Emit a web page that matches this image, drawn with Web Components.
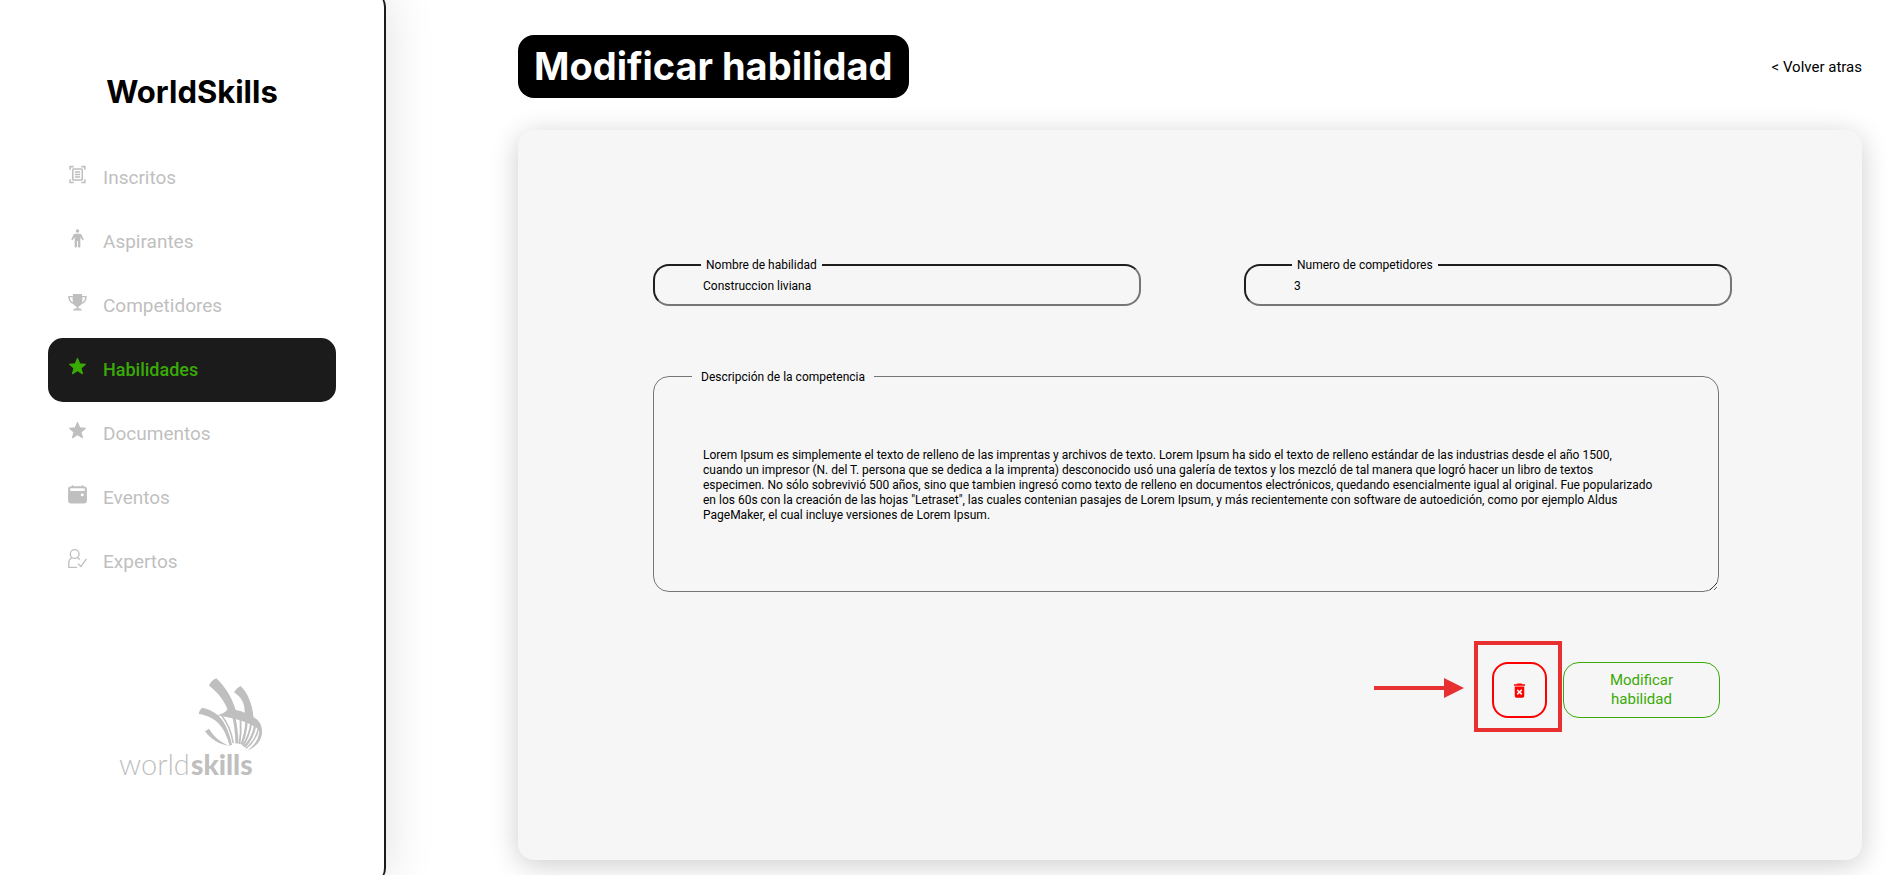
<!DOCTYPE html>
<html lang="es">
<head>
<meta charset="utf-8">
<meta name="viewport" content="width=device-width, initial-scale=1">
<title>WorldSkills - Modificar habilidad</title>
<style>
  body { margin: 0; background: #fff; color: #000; font-family: Roboto, "Liberation Sans", sans-serif; }
</style>
</head>
<body>
<ws-app>
  <ws-sidebar slot="side">
    <ws-nav-item icon="scan">Inscritos</ws-nav-item>
    <ws-nav-item icon="person">Aspirantes</ws-nav-item>
    <ws-nav-item icon="trophy">Competidores</ws-nav-item>
    <ws-nav-item icon="star" active>Habilidades</ws-nav-item>
    <ws-nav-item icon="star">Documentos</ws-nav-item>
    <ws-nav-item icon="calendar">Eventos</ws-nav-item>
    <ws-nav-item icon="expert">Expertos</ws-nav-item>
  </ws-sidebar>
  <ws-page-header>Modificar habilidad</ws-page-header>
  <ws-skill-form></ws-skill-form>
</ws-app>

<script>
const ICONS = {
  scan: '<g fill="none" stroke="currentColor" stroke-width="1.6"><path d="M2.200 5V1.700H6M14 1.700h3.800V5M2.200 15v3.300H6M14 18.300h3.800V15"/><rect x="5" y="4.200" width="10" height="11.600" rx=".8"/><path d="M7.300 7.400h5.400M7.300 10h5.400M7.300 12.600h5.400" stroke-width="1.400"/></g>',
  person: '<path fill="currentColor" d="M10 .2a1.900 1.900 0 1 1 0 3.800 1.900 1.900 0 0 1 0-3.800zM7.600 5h4.800c.9 0 1.500.4 2 1.200l1.900 4.300c.5 1.200-.9 1.800-1.500.8L13 8.600v9.900c0 1.500-2.500 1.500-2.500 0v-5.800h-1v5.800c0 1.500-2.500 1.500-2.500 0V8.600l-1.800 2.700c-.6 1-2 .4-1.500-.8l1.900-4.300c.5-.8 1.100-1.200 2-1.200z"/>',
  trophy: '<path fill="currentColor" fill-rule="evenodd" d="M5.300 1h9.400l.2 2.200h4.900c0 4.600-1.900 7.600-5.700 8.600-.9 1.300-1.900 2-3.100 2.300v2.200h1.500c1.200 0 2 .8 2 2.100h-9c0-1.300.8-2.100 2-2.100H9v-2.200c-1.200-.3-2.200-1-3.100-2.300C2.100 10.800.2 7.800.2 3.200h4.900zM1.900 4.600c.2 2.400 1.200 4.400 3.200 5.400-.2-1.500-.3-3.500-.2-5.400zm13.200 0c.1 1.900 0 3.900-.2 5.400 2-1 3-3 3.200-5.400z"/>',
  star: '<path fill="currentColor" stroke="currentColor" stroke-width="1.200" stroke-linejoin="round" d="M10 1.500l2.300 5.600 6 .5-4.600 4 1.500 6-5.200-3.300-5.200 3.300 1.500-6-4.600-4 6-.5z"/>',
  calendar: '<path fill="currentColor" fill-rule="evenodd" d="M4 .3h1.600v1h8.800v-1H16v1c2.500 0 3.900 1 3.900 3v12.300c0 1.900-1.200 2.900-3.200 2.900H3.300c-2 0-3.200-1-3.200-2.900V4.300c0-2 1.400-3 3.900-3zM3.500 3.500a1.400 1.400 0 0 0 0 2.800h13a1.400 1.400 0 0 0 0-2.800zM15 8.600a1.600 1.600 0 1 0 0 3.200 1.600 1.600 0 0 0 0-3.200z"/>',
  expert: '<g fill="none" stroke="currentColor" stroke-width="1.400"><circle cx="7" cy="5.300" r="4.600"/><path d="M4.500 9.200C2 10.200.8 12.200.8 14.500v4.800h8.800M9.500 9.200c1.200.4 2.100 1 2.800 2M10.400 15.400l3.200 3.100 5.800-8"/></g>'
};

class WsElement extends HTMLElement {
  connectedCallback() {
    if (this.shadowRoot) return;
    this.attachShadow({ mode: 'open' }).innerHTML = this.view();
  }
}

customElements.define('ws-app', class extends WsElement {
  view() { return `
    <style>
      :host { display: flex; min-height: 100vh; overflow: clip; }
      main { flex: 1; min-width: 0; box-sizing: border-box; padding: 35px 31px 15px 132px; display: flex; flex-direction: column; gap: 32px; }
    </style>
    <slot name="side"></slot>
    <main><slot></slot></main>`; }
});

customElements.define('ws-sidebar', class extends WsElement {
  view() { return `
    <style>
      :host {
        display: flex; flex-direction: column; align-items: center; box-sizing: border-box;
        flex: none; width: 386px; margin: -8px 0; padding: 80px 0 16px;
        background: #fff; border-right: 2px solid #1b1b1b; border-radius: 0 15px 15px 0;
        box-shadow: 0 0 50px rgba(0, 0, 0, .13);
      }
      h2 { margin: 0; font: 700 31px/40px Inter, sans-serif; }
      nav { width: 75%; margin-top: 34px; }
      ws-logo { margin-top: 84px; }
    </style>
    <h2>WorldSkills</h2>
    <nav><slot></slot></nav>
    <ws-logo></ws-logo>`; }
});

customElements.define('ws-nav-item', class extends WsElement {
  view() { return `
    <style>
      :host { display: block; color: #bfbfbf; }
      :host([active]) { color: #3aaa06; }
      a {
        display: flex; align-items: center; gap: 16px; height: 64px; padding: 0 20px; box-sizing: border-box;
        color: inherit; text-decoration: none; font-size: 19px; line-height: 24px; border-radius: 15px;
      }
      :host([active]) a { background: #1b1b1b; font-size: 18px; font-weight: 500; }
      svg { display: block; width: 19px; height: 19px; padding-bottom: 7px; flex: none; }
    </style>
    <a href="#"><svg viewBox="0 0 20 20" aria-hidden="true">${ICONS[this.getAttribute('icon')]}</svg><slot></slot></a>`; }
});

customElements.define('ws-logo', class extends WsElement {
  view() { return `
    <style>
      :host { display: block; }
      svg { display: block; overflow: visible; }
      text { font-family: Lato, sans-serif; font-size: 29px; }
      .bold { font-size: 28px; font-weight: 900; }
    </style>
    <svg width="146" height="112" viewBox="0 0 146 112" fill="#bfbfbf" role="img" aria-label="worldskills">
      <path d="M90 7.500c.6-2 3.200-5.500 7.300-7.200 9 8.500 15.500 19 19.400 31.700 3.300.5 6 1.300 9 2.700.2-8.700-2.700-15-10.700-20.400 1.500-2.500 3.700-4.700 6.700-6.300 7.500 7.500 11.700 18.500 12.800 31.300 6 3 8.500 8 8.500 14.200 0 8.500-5 15-14.700 19.200 7-5.200 11.300-11.200 12-19.500l-2-2.900c-12-8-26-10.500-40-13 4.500-1 8-2.700 10.200-6C105 22.300 99 14.500 90 7.500z"/>
      <path d="M79.700 36c.3-2.400 1.500-4.700 3.600-6.300 6.500 1.500 11.700 4 16 7.800 7 7 11 17 13.700 29.200l-2.300 1.300C106.700 51.500 98.500 38.500 79.700 36z"/>
      <path d="M86 53.300l4-2.600c4.800 8 10.800 13 20 17.200-10-1.600-18-6.400-24-14.600z"/>
      <g fill="none" stroke="#bfbfbf">
        <path d="M103 38c6 7.500 9.500 16.500 11.200 27" stroke-width="1.500"/>
        <path d="M115 40c2 8 2.700 16 3 25.500" stroke-width="3"/>
        <path d="M121.500 42c.6 8 .3 15-1 24" stroke-width="1.800"/>
        <path d="M127.500 44c-.5 8-2 15-5 22.500" stroke-width="2.400"/>
        <path d="M132 46c-1 8-4 15-8 22" stroke-width="2"/>
        <path d="M136 48c-1.300 8-5 15-10.500 21" stroke-width="2.200"/>
        <path d="M139.500 50c-1.500 9-6 15-12.500 20.500" stroke-width="1.600"/>
      </g>
      <text x="0" y="97" font-weight="300">world</text>
      <text class="bold" x="72" y="97">skills</text>
    </svg>`; }
});

customElements.define('ws-page-header', class extends WsElement {
  view() { return `
    <style>
      :host { display: flex; align-items: center; justify-content: space-between; }
      h1 { margin: 0; padding: 8px 16px; border-radius: 16px; background: #000; color: #fff; font: 700 38px/47px Inter, sans-serif; }
      a { color: #000; text-decoration: none; font-size: 15px; line-height: 20px; }
    </style>
    <h1><slot></slot></h1>
    <a href="#">&lt; Volver atras</a>`; }
});

customElements.define('ws-field', class extends WsElement {
  view() { return `
    <style>
      :host { display: block; position: relative; }
      label { position: absolute; left: 48px; top: -7px; padding: 0 5px; background: #f6f6f6; font-size: 12px; line-height: 16px; }
      input {
        display: block; width: 100%; height: 42px; box-sizing: border-box; padding: 2px 48px 0;
        border: 2px solid; border-color: #1e1e1e #767676 #767676 #1e1e1e; border-radius: 16px;
        background: none; color: #000; font: 12px/16px Roboto, sans-serif; outline: none;
      }
    </style>
    <label for="f">${this.getAttribute('label')}</label>
    <input id="f" type="text" value="${this.getAttribute('value')}">`; }
});

customElements.define('ws-textarea', class extends WsElement {
  view() { return `
    <style>
      :host { display: block; position: relative; }
      label { position: absolute; left: 39px; top: -7px; padding: 0 9px; background: #f6f6f6; font-size: 12px; line-height: 16px; }
      textarea {
        display: block; width: 100%; height: 216px; box-sizing: border-box; padding: 71px 49px 60px;
        border: 1px solid #767676; border-radius: 16px; background: none; color: #000;
        font: 12px/15px Roboto, sans-serif; outline: none; overflow: auto;
      }
    </style>
    <label for="t">${this.getAttribute('label')}</label>
    <textarea id="t">${this.textContent.trim().replace(/\n\s+/g, '\n')}</textarea>`; }
});

customElements.define('ws-delete-button', class extends WsElement {
  view() { return `
    <style>
      :host { display: block; position: relative; }
      button {
        display: grid; place-items: center; width: 55px; height: 56px; padding: 0;
        border: 2px solid #f00; border-radius: 16px; background: none; color: #f00;
      }
      button svg { display: block; width: 19px; height: 19px; }
      .frame { position: absolute; inset: -21px -15px -14px -18px; border: 4px solid #e83030; pointer-events: none; }
      .arrow { position: absolute; right: 83px; top: 16px; }
    </style>
    <button type="button" aria-label="Eliminar">
      <svg viewBox="0 0 24 24" fill="currentColor" aria-hidden="true"><path d="M6 19c0 1.100.9 2 2 2h8c1.100 0 2-.9 2-2V7H6v12zm2.460-7.120l1.410-1.410L12 12.590l2.120-2.120 1.410 1.410L13.410 14l2.120 2.120-1.410 1.410L12 15.410l-2.120 2.120-1.410-1.410L10.590 14l-2.130-2.120zM15.500 4l-1-1h-5l-1 1H5v2h14V4z"/></svg>
    </button>
    <span class="frame"></span>
    <svg class="arrow" width="90" height="20" viewBox="0 0 90 20" fill="#e83030" aria-hidden="true"><path d="M0 8h70V0l20 10-20 10v-8H0z"/></svg>`; }
});

customElements.define('ws-skill-form', class extends WsElement {
  view() { return `
    <style>
      :host { display: block; }
      form {
        display: flex; flex-direction: column; gap: 70px; padding: 134px 130px 142px 135px;
        border-radius: 16px; background: #f6f6f6; box-shadow: 0 5px 28px rgba(0, 0, 0, .2);
      }
      .row { display: grid; grid-template-columns: 1fr 1fr; gap: 103px; }
      ws-textarea { margin-right: 13px; }
      .actions { display: flex; justify-content: flex-end; gap: 16px; margin-right: 12px; }
      .save {
        width: 157px; height: 56px; padding: 0 45px; border: 1px solid #3aaa06; border-radius: 16px;
        background: none; color: #3aaa06; font: 15px/19px Roboto, sans-serif;
      }
    </style>
    <form>
      <div class="row">
        <ws-field label="Nombre de habilidad" value="Construccion liviana"></ws-field>
        <ws-field label="Numero de competidores" value="3"></ws-field>
      </div>
      <ws-textarea label="Descripción de la competencia">
        Lorem Ipsum es simplemente el texto de relleno de las imprentas y archivos de texto. Lorem Ipsum ha sido el texto de relleno estándar de las industrias desde el año 1500,
        cuando un impresor (N. del T. persona que se dedica a la imprenta) desconocido usó una galería de textos y los mezcló de tal manera que logró hacer un libro de textos
        especimen. No sólo sobrevivió 500 años, sino que tambien ingresó como texto de relleno en documentos electrónicos, quedando esencialmente igual al original. Fue popularizado
        en los 60s con la creación de las hojas "Letraset", las cuales contenian pasajes de Lorem Ipsum, y más recientemente con software de autoedición, como por ejemplo Aldus
        PageMaker, el cual incluye versiones de Lorem Ipsum.
      </ws-textarea>
      <div class="actions">
        <ws-delete-button></ws-delete-button>
        <button class="save" type="submit">Modificar habilidad</button>
      </div>
    </form>`; }
});
</script>
</body>
</html>
